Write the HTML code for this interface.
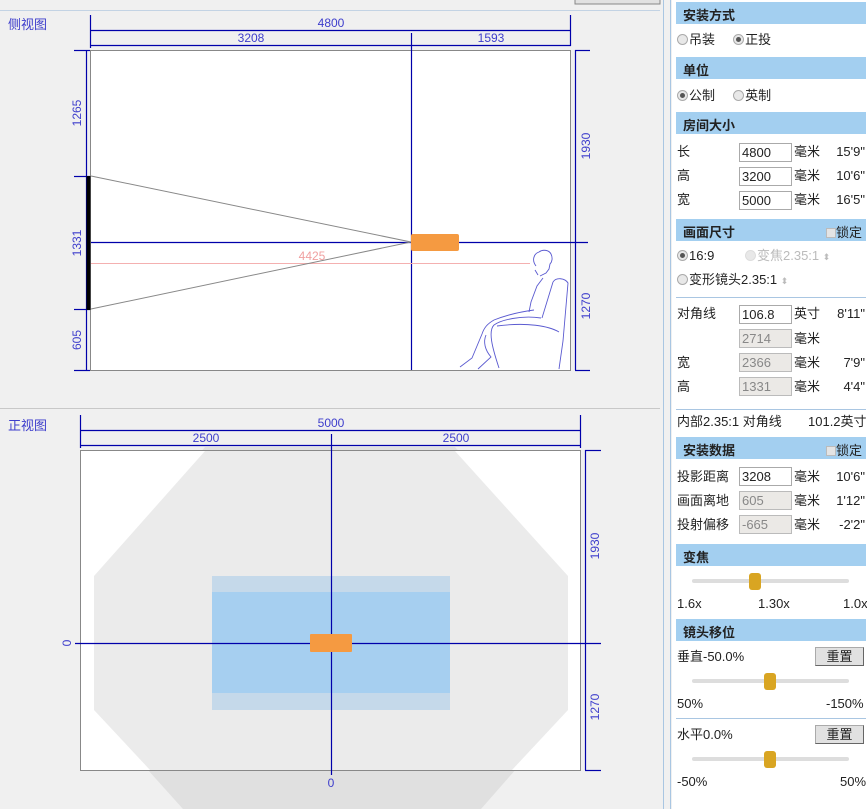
<!DOCTYPE html>
<html><head><meta charset="utf-8"><style>
*{margin:0;padding:0;box-sizing:border-box}
body{width:867px;height:809px;background:#fff;position:relative;overflow:hidden;font-family:"Liberation Sans","Noto Sans CJK SC",sans-serif;font-size:13px;color:#222}
.a{position:absolute;white-space:nowrap;line-height:16px}
.h{position:absolute;left:676px;width:190px;height:22px;background:#a3cff0;font-weight:bold;font-size:13px;padding:3px 0 0 7px}
.in{position:absolute;left:739px;width:53px;height:19px;border:1px solid #aaa;background:#fff;font-size:13px;padding:1px 2px}
.in.d{background:#ebe9e6;color:#888;border-color:#bbb}
.r{display:inline-block;width:11px;height:11px;border-radius:50%;border:1px solid #aaa;background:#e8e8e8;vertical-align:-1px;margin-right:1px;position:relative}
.r.on::after{content:"";position:absolute;left:2px;top:2px;width:5px;height:5px;border-radius:50%;background:#555}
.cb{display:inline-block;width:10px;height:10px;border:1px solid #bbb;background:#e4e4e4;vertical-align:-1px}
.tr{position:absolute;left:692px;width:157px;height:4px;background:#ddd;border-radius:2px}
.th{position:absolute;width:12px;height:17px;background:#d9a522;border-radius:3px}
.btn{position:absolute;left:815px;width:49px;height:19px;background:#e1e1e1;border:1px solid #aaa;border-right-color:#666;border-bottom-color:#666;text-align:center;font-size:13px;line-height:17px}
.hr{position:absolute;left:676px;width:190px;height:1px;background:#a9c6e2}
.rt{text-align:right;width:60px}
</style></head><body>
<svg class="a" style="left:0;top:0" width="672" height="809" font-family="Liberation Sans, sans-serif" font-size="12">
<rect width="672" height="809" fill="#f0f0f0"/>
<rect x="575" y="-4" width="85" height="8" fill="#e1e1e1" stroke="#888"/>
<line x1="0" y1="10.5" x2="660" y2="10.5" stroke="#c3d3e4"/>
<line x1="663.5" y1="0" x2="663.5" y2="809" stroke="#a9c6e2"/>
<line x1="670.5" y1="0" x2="670.5" y2="809" stroke="#a9c6e2"/>
<text x="8" y="29" fill="#3d3dcc" font-family="Liberation Sans, Noto Sans CJK SC, sans-serif" font-size="13">侧视图</text>
<rect x="90.5" y="50.5" width="480" height="320" fill="#fff" stroke="#888"/>
<g stroke="#0000aa" stroke-width="1.2" fill="none">
<line x1="90.5" y1="15" x2="90.5" y2="48"/><line x1="570.5" y1="15" x2="570.5" y2="46"/>
<line x1="90" y1="30.5" x2="571" y2="30.5"/><line x1="90" y1="45.5" x2="571" y2="45.5"/>
<line x1="411.5" y1="33" x2="411.5" y2="370"/>
<line x1="91" y1="242.5" x2="588" y2="242.5"/>
<line x1="86.5" y1="50" x2="86.5" y2="370"/>
<line x1="74" y1="50.5" x2="90" y2="50.5"/><line x1="74" y1="176.5" x2="90" y2="176.5"/><line x1="74" y1="309.5" x2="90" y2="309.5"/><line x1="74" y1="370.5" x2="90" y2="370.5"/>
<line x1="575.5" y1="50" x2="575.5" y2="370"/>
<line x1="575" y1="50.5" x2="590" y2="50.5"/><line x1="575" y1="370.5" x2="590" y2="370.5"/>
</g>
<g fill="#3d3dcc" text-anchor="middle">
<text x="331" y="27">4800</text><text x="251" y="42">3208</text><text x="491" y="42">1593</text>
<text transform="translate(81,113) rotate(-90)">1265</text>
<text transform="translate(81,243) rotate(-90)">1331</text>
<text transform="translate(81,340) rotate(-90)">605</text>
<text transform="translate(590,146) rotate(-90)">1930</text>
<text transform="translate(590,306) rotate(-90)">1270</text>
</g>
<line x1="91" y1="263.5" x2="530" y2="263.5" stroke="#f4b0b0"/>
<text x="312" y="260" fill="#f0a0a0" text-anchor="middle">4425</text>
<line x1="91" y1="176" x2="411" y2="242" stroke="#888"/><line x1="91" y1="309" x2="411" y2="242" stroke="#888"/>
<rect x="86.5" y="176" width="4" height="134" fill="#000"/>
<rect x="411" y="234" width="48" height="17" rx="2" fill="#f59a41"/>
<g stroke="#5a5ad0" fill="none" stroke-width="0.9">
<path d="M536 266c-4-5-3-12 3-14 4-3 10-2 12 2 2 4 1 8-1 10l-1 5-3 4-6 3"/>
<path d="M535 270l3 5"/>
<path d="M543 278l-6 8-6 16-2 10"/>
<path d="M553 282c3-5 12-4 15 1l-5 58-4 28"/>
<path d="M553 282l-11 36"/>
<path d="M534 310c-15 2-30 6-40 10-7 4-10 8-12 14l-10 24-12 9"/>
<path d="M541 318c-20-3-40 2-47 7-6 6-2 22 5 43"/>
<path d="M486 335c-3 7-1 15 5 22l-13 12"/>
<path d="M497 326c30-4 52 0 62 6"/>
</g>
<line x1="0" y1="408.5" x2="660" y2="408.5" stroke="#c8c8c8"/>
<text x="8" y="430" fill="#3d3dcc" font-family="Liberation Sans, Noto Sans CJK SC, sans-serif" font-size="13">正视图</text>
<polygon points="205,447 455,447 568,576 568,710 481,809 183,809 94,710 94,576" fill="#e0e0e0"/>
<rect x="80.5" y="450.5" width="500" height="320" fill="#fff" stroke="#888"/>
<polygon points="205,451 455,451 568,576 568,710 512,770 150,770 94,710 94,576" fill="#ebebeb"/>
<rect x="212" y="576" width="238" height="134" fill="#c5d9ea"/>
<rect x="212" y="592" width="238" height="101" fill="#a6cff0"/>
<g stroke="#0000aa" stroke-width="1.2" fill="none">
<line x1="80.5" y1="415" x2="80.5" y2="448"/><line x1="580.5" y1="415" x2="580.5" y2="448"/>
<line x1="80" y1="430.5" x2="581" y2="430.5"/><line x1="80" y1="445.5" x2="581" y2="445.5"/>
<line x1="331.5" y1="434" x2="331.5" y2="775"/>
<line x1="75" y1="643.5" x2="601" y2="643.5"/>
<line x1="585.5" y1="450" x2="585.5" y2="770"/>
<line x1="585" y1="450.5" x2="601" y2="450.5"/><line x1="585" y1="770.5" x2="601" y2="770.5"/>
</g>
<rect x="310" y="634" width="42" height="18" rx="1" fill="#f59a41"/>
<g fill="#3d3dcc" text-anchor="middle">
<text x="331" y="427">5000</text><text x="206" y="442">2500</text><text x="456" y="442">2500</text>
<text transform="translate(71,643) rotate(-90)">0</text>
<text x="331" y="787">0</text>
<text transform="translate(599,546) rotate(-90)">1930</text>
<text transform="translate(599,707) rotate(-90)">1270</text>
</g>
</svg>

<div class="h" style="top:2px">安装方式</div>
<div class="a" style="left:677px;top:32px"><span class="r"></span>吊装 &nbsp;&nbsp;&nbsp;&nbsp;<span class="r on"></span>正投</div>
<div class="h" style="top:57px">单位</div>
<div class="a" style="left:677px;top:88px"><span class="r on"></span>公制 &nbsp;&nbsp;&nbsp;&nbsp;<span class="r"></span>英制</div>
<div class="h" style="top:112px">房间大小</div>
<div class="a" style="left:677px;top:144px">长</div><div class="in" style="top:143px">4800</div><div class="a" style="left:794px;top:144px">毫米</div><div class="a rt" style="left:805px;top:144px">15'9"</div>
<div class="a" style="left:677px;top:168px">高</div><div class="in" style="top:167px">3200</div><div class="a" style="left:794px;top:168px">毫米</div><div class="a rt" style="left:805px;top:168px">10'6"</div>
<div class="a" style="left:677px;top:192px">宽</div><div class="in" style="top:191px">5000</div><div class="a" style="left:794px;top:192px">毫米</div><div class="a rt" style="left:805px;top:192px">16'5"</div>
<div class="h" style="top:219px">画面尺寸<span style="position:absolute;right:4px;font-weight:normal"><span class="cb"></span>锁定</span></div>
<div class="a" style="left:677px;top:248px"><span class="r on"></span>16:9</div>
<div class="a" style="left:745px;top:248px;color:#bbb"><span class="r" style="border-color:#ddd"></span>变焦2.35:1 <span style="font-size:9px">⬍</span></div>
<div class="a" style="left:677px;top:272px"><span class="r"></span>变形镜头2.35:1 <span style="color:#bbb;font-size:9px">⬍</span></div>
<div class="hr" style="top:297px"></div>
<div class="a" style="left:677px;top:306px">对角线</div><div class="in" style="top:305px">106.8</div><div class="a" style="left:794px;top:306px">英寸</div><div class="a rt" style="left:805px;top:306px">8'11"</div>
<div class="in d" style="top:329px">2714</div><div class="a" style="left:794px;top:331px">毫米</div>
<div class="a" style="left:677px;top:355px">宽</div><div class="in d" style="top:353px">2366</div><div class="a" style="left:794px;top:355px">毫米</div><div class="a rt" style="left:805px;top:355px">7'9"</div>
<div class="a" style="left:677px;top:379px">高</div><div class="in d" style="top:377px">1331</div><div class="a" style="left:794px;top:379px">毫米</div><div class="a rt" style="left:805px;top:379px">4'4"</div>
<div class="hr" style="top:409px"></div>
<div class="a" style="left:677px;top:414px">内部2.35:1 对角线</div><div class="a" style="left:808px;top:414px">101.2英寸</div>
<div class="h" style="top:437px">安装数据<span style="position:absolute;right:4px;font-weight:normal"><span class="cb"></span>锁定</span></div>
<div class="a" style="left:677px;top:469px">投影距离</div><div class="in" style="top:467px">3208</div><div class="a" style="left:794px;top:469px">毫米</div><div class="a rt" style="left:805px;top:469px">10'6"</div>
<div class="a" style="left:677px;top:493px">画面离地</div><div class="in d" style="top:491px">605</div><div class="a" style="left:794px;top:493px">毫米</div><div class="a rt" style="left:805px;top:493px">1'12"</div>
<div class="a" style="left:677px;top:517px">投射偏移</div><div class="in d" style="top:515px">-665</div><div class="a" style="left:794px;top:517px">毫米</div><div class="a rt" style="left:805px;top:517px">-2'2"</div>
<div class="h" style="top:544px">变焦</div>
<div class="tr" style="top:579px"></div><div class="th" style="left:749px;top:573px"></div>
<div class="a" style="left:677px;top:596px">1.6x</div><div class="a" style="left:758px;top:596px">1.30x</div><div class="a" style="left:843px;top:596px">1.0x</div>
<div class="h" style="top:619px">镜头移位</div>
<div class="a" style="left:677px;top:649px">垂直-50.0%</div><div class="btn" style="top:647px">重置</div>
<div class="tr" style="top:679px"></div><div class="th" style="left:764px;top:673px"></div>
<div class="a" style="left:677px;top:696px">50%</div><div class="a" style="left:826px;top:696px">-150%</div>
<div class="hr" style="top:718px"></div>
<div class="a" style="left:677px;top:727px">水平0.0%</div><div class="btn" style="top:725px">重置</div>
<div class="tr" style="top:757px"></div><div class="th" style="left:764px;top:751px"></div>
<div class="a" style="left:677px;top:774px">-50%</div><div class="a" style="left:840px;top:774px">50%</div>
</body></html>
